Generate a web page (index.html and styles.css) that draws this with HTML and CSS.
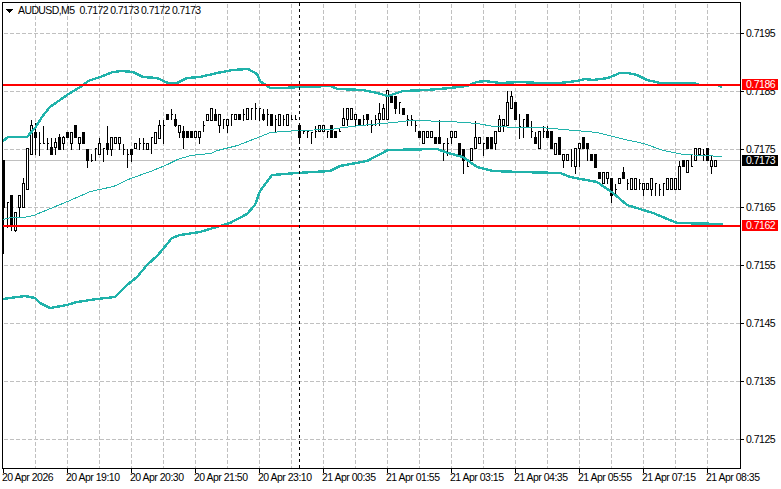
FILE: index.html
```html
<!DOCTYPE html>
<html lang="en">
<head>
<meta charset="utf-8">
<title>AUDUSD,M5</title>
<link rel="stylesheet" href="styles.css">
</head>
<body>
<main class="terminal">
  <svg class="chart" viewBox="0 0 781 489" width="781" height="489" aria-hidden="true">
    <g class="crisp" transform="translate(.5 .5)">
      <path class="grid" d="M35 3V468M67 3V468M99 3V468M131 3V468M163 3V468M195 3V468M227 3V468M259 3V468M291 3V468M323 3V468M355 3V468M387 3V468M419 3V468M451 3V468M483 3V468M515 3V468M547 3V468M579 3V468M611 3V468M643 3V468M675 3V468M707 3V468"/>
      <path class="grid" d="M3 33H740M3 91H740M3 149H740M3 207H740M3 265H740M3 323H740M3 381H740M3 439H740"/>
      <path class="bid" d="M3 160H740"/>
      <path class="wick" d="M3 160V253M7 201V227M6 202h2M11 195V230M15 212V231M19 195V217M23 177V207M27 148V189M31 119V154M35 122V154M39 131V155M38 143h2M43 125V143M42 143h2M47 137V149M46 143h2M51 137V154M55 137V154M59 133V149M63 135V149M71 132V149M79 137V149M87 149V167M91 153V161M90 160h2M95 148V160M94 148h2M99 137V154M103 148V161M102 148h2M107 125V154M111 137V155M119 137V149M123 143V154M122 149h2M127 148V167M126 154h2M131 149V161M139 137V149M138 143h2M143 137V149M142 143h2M147 142V149M151 137V153M150 137h2M159 119V138M163 119V143M162 125h2M171 108V119M170 114h2M175 113V126M179 125V137M183 125V148M199 131V143M203 120V131M202 125h2M215 108V120M219 114V132M223 119V128M222 119h2M227 119V132M231 114V125M230 114h2M243 108V120M242 114h2M251 108V119M250 108h2M255 102V119M254 108h2M259 108V120M258 108h2M263 108V120M267 108V125M266 114h2M275 114V132M274 119h2M283 114V125M282 119h2M291 114V119M290 119h2M295 114V119M294 119h2M299 125V141M303 129V133M302 131h2M307 131V137M306 131h2M311 131V143M310 132h2M315 125V137M314 131h2M327 131V137M326 131h2M339 127V131M338 131h2M343 107V125M347 108V125M355 114V125M363 114V125M362 119h2M367 114V125M371 119V132M370 125h2M375 114V125M374 119h2M379 102V125M383 103V119M395 96V113M399 102V113M398 102h2M407 114V125M406 119h2M411 114V125M410 119h2M415 119V131M414 125h2M439 119V143M443 143V160M442 143h2M447 137V155M446 143h2M451 131V143M463 149V173M467 160V166M466 166h2M475 120V148M483 143V155M482 143h2M495 131V149M499 114V131M503 119V131M507 90V125M511 90V108M519 113V138M518 126h2M523 119V137M522 119h2M531 120V137M530 131h2M535 131V143M543 125V137M542 131h2M547 125V137M563 154V167M571 148V166M570 160h2M575 148V173M579 143V166M587 143V160M607 172V183M611 178V202M615 183V195M614 189h2M623 166V178M627 178V189M626 183h2M639 178V189M638 183h2M643 183V195M651 178V195M655 183V195M654 183h2M659 183V195M658 189h2M663 183V195M662 183h2M679 160V189M691 154V166M690 166h2M703 148V160M702 154h2M711 154V173"/>
      <path class="body-up" d="M14 212h2v18h-2zM18 195h2v12h-2zM22 183h2v24h-2zM26 148h2v41h-2zM30 125h2v29h-2zM54 142h2v5h-2zM62 137h2v6h-2zM70 132h2v11h-2zM78 137h2v6h-2zM98 143h2v11h-2zM110 137h2v12h-2zM114 137h2v6h-2zM118 137h2v6h-2zM134 143h2v5h-2zM146 143h2v6h-2zM154 132h2v11h-2zM158 125h2v13h-2zM178 125h2v7h-2zM194 131h2v6h-2zM198 131h2v6h-2zM206 114h2v6h-2zM210 108h2v12h-2zM218 114h2v11h-2zM226 119h2v6h-2zM234 114h2v5h-2zM246 108h2v11h-2zM278 114h2v11h-2zM286 114h2v11h-2zM318 125h2v6h-2zM322 125h2v6h-2zM342 118h2v7h-2zM346 108h2v11h-2zM350 108h2v11h-2zM354 114h2v5h-2zM378 113h2v6h-2zM382 108h2v11h-2zM386 90h2v29h-2zM422 131h2v12h-2zM426 131h2v6h-2zM430 131h2v6h-2zM450 131h2v6h-2zM454 131h2v6h-2zM470 148h2v12h-2zM474 137h2v11h-2zM478 137h2v6h-2zM494 131h2v12h-2zM498 119h2v12h-2zM502 119h2v6h-2zM506 102h2v23h-2zM510 96h2v12h-2zM538 131h2v17h-2zM554 143h2v11h-2zM562 154h2v6h-2zM566 154h2v6h-2zM574 148h2v18h-2zM578 143h2v5h-2zM602 172h2v11h-2zM606 172h2v6h-2zM618 178h2v5h-2zM630 178h2v11h-2zM634 178h2v11h-2zM642 183h2v6h-2zM646 183h2v6h-2zM650 178h2v11h-2zM666 178h2v11h-2zM670 178h2v11h-2zM674 178h2v11h-2zM678 166h2v23h-2zM686 160h2v12h-2zM694 148h2v12h-2zM698 148h2v6h-2zM710 160h2v6h-2zM714 160h2v6h-2z"/>
      <path class="body-down" d="M2 160h2v47h-2zM10 195h2v31h-2zM34 132h2v5h-2zM50 147h2v7h-2zM58 137h2v12h-2zM66 132h2v5h-2zM74 125h2v12h-2zM82 132h2v11h-2zM86 149h2v11h-2zM106 143h2v6h-2zM130 149h2v5h-2zM166 114h2v5h-2zM174 119h2v6h-2zM182 131h2v6h-2zM186 131h2v6h-2zM190 131h2v6h-2zM214 114h2v6h-2zM238 114h2v5h-2zM262 114h2v5h-2zM270 114h2v11h-2zM298 125h2v12h-2zM330 125h2v12h-2zM334 131h2v6h-2zM358 119h2v6h-2zM366 114h2v5h-2zM390 96h2v6h-2zM394 96h2v12h-2zM402 108h2v6h-2zM418 131h2v6h-2zM434 137h2v6h-2zM438 137h2v6h-2zM458 143h2v12h-2zM462 149h2v11h-2zM486 137h2v11h-2zM490 137h2v11h-2zM514 102h2v17h-2zM526 114h2v12h-2zM534 137h2v6h-2zM546 131h2v6h-2zM550 131h2v17h-2zM558 137h2v17h-2zM582 137h2v11h-2zM586 143h2v5h-2zM590 154h2v6h-2zM594 154h2v13h-2zM598 172h2v6h-2zM610 178h2v17h-2zM622 172h2v6h-2zM682 160h2v6h-2zM706 148h2v12h-2z"/>
      <polyline class="mid" points="3,219 10,217 23,217 33,215 50,208 67,201 90,191 113,186 130,178 150,171 167,164 177,159 190,155 210,153 217,150 237,145 260,136 270,132 297,130 330,129 343,127 360,125 393,122 410,120 450,121 477,123 493,126 520,127 540,127 563,129 597,132 620,138 643,143 663,150 683,154 722,156"/>
    </g>
    <g class="crisp">
      <polyline class="band" points="3,141 8,137 27,137 35,128 42,117 50,107 67,95 82,86 88,81 100,77 113,72 122,71 133,72 143,77 157,78 168,83 177,83 187,78 200,77 217,73 233,70 248,69 257,74 260,81 270,88 283,88 300,87 330,86 338,89 363,90 377,93 388,96 403,91 427,90 450,88 467,86 477,82 485,81 500,83 520,82 540,83 560,83 577,81 585,79 593,80 608,78 620,73 628,73 637,75 647,80 660,83 693,83 700,85 718,85 722,87"/>
      <polyline class="band" points="3,299 10,298 25,296 35,298 40,303 50,308 67,305 77,302 97,299 115,297 127,285 137,277 147,265 158,255 172,238 180,235 200,232 213,228 230,223 247,214 255,205 260,191 272,175 297,173 330,171 340,166 367,161 388,150 437,149 448,153 463,157 477,167 493,171 520,172 560,173 570,177 597,182 613,193 627,205 653,213 677,223 723,224"/>
      <path class="level" d="M3 85H740M3 226H740"/>
      <path class="cursor" d="M299.500 3V468"/>
      <path class="frame" d="M2.500 2.500H740.500V468.500H2.500Z"/>
      <path class="frame" d="M741 33.500h3M741 91.500h3M741 149.500h3M741 207.500h3M741 265.500h3M741 323.500h3M741 381.500h3M741 439.500h3M3.500 469v4M67.500 469v4M131.500 469v4M195.500 469v4M259.500 469v4M323.500 469v4M387.500 469v4M451.500 469v4M515.500 469v4M579.500 469v4M643.500 469v4M707.500 469v4"/>
      <path class="caret" d="M6 9h7l-3.500 4z"/>
    </g>
  </svg>

  <header class="legend">
    <span>AUDUSD,M5</span>
    <span>0.7172 0.7173 0.7172 0.7173</span>
  </header>

  <div class="price-axis">
    <span class="price">0.7195</span>
    <span class="price">0.7185</span>
    <span class="price">0.7175</span>
    <span class="price">0.7165</span>
    <span class="price">0.7155</span>
    <span class="price">0.7145</span>
    <span class="price">0.7135</span>
    <span class="price">0.7125</span>
    <span class="tag tag-red tag-high">0.7186</span>
    <span class="tag tag-black tag-bid">0.7173</span>
    <span class="tag tag-red tag-low">0.7162</span>
  </div>

  <div class="time-axis">
    <span>20 Apr 2026</span>
    <span>20 Apr 19:10</span>
    <span>20 Apr 20:30</span>
    <span>20 Apr 21:50</span>
    <span>20 Apr 23:10</span>
    <span>21 Apr 00:35</span>
    <span>21 Apr 01:55</span>
    <span>21 Apr 03:15</span>
    <span>21 Apr 04:35</span>
    <span>21 Apr 05:55</span>
    <span>21 Apr 07:15</span>
    <span>21 Apr 08:35</span>
  </div>
</main>
</body>
</html>
```

FILE: styles.css
```css
html, body {
  margin: 0;
  padding: 0;
  background: #fff;
}

.terminal {
  display: grid;
  grid-template-columns: 741px 40px;
  grid-template-rows: 469px 20px;
  width: 781px;
  height: 489px;
  overflow: hidden;
  color: #000;
  font-family: "Liberation Sans", Arial, sans-serif;
  font-size: 10.5px;
  letter-spacing: -0.5px;
}

.chart {
  grid-area: 1 / 1 / 3 / 3;
  display: block;
}

.crisp { shape-rendering: crispEdges; }

.grid {
  fill: none;
  stroke: #c0c0c0;
  stroke-width: 1;
  stroke-dasharray: 4 2;
}

.bid { fill: none; stroke: #c0c0c0; stroke-width: 1; }
.wick { fill: none; stroke: #000; stroke-width: 1; }
.body-up { fill: #fff; stroke: #000; stroke-width: 1; }
.body-down { fill: #000; stroke: #000; stroke-width: 1; }
.band { fill: none; stroke: #20b2aa; stroke-width: 2.4; stroke-linejoin: round; }
.mid { fill: none; stroke: #20b2aa; stroke-width: 1; stroke-linejoin: round; }
.level { fill: none; stroke: #f00; stroke-width: 2; }
.cursor { fill: none; stroke: #000; stroke-width: 1; stroke-dasharray: 3 3; }
.frame { fill: none; stroke: #000; stroke-width: 1; }
.caret { fill: #000; }

.legend {
  grid-area: 1 / 1;
  align-self: start;
  z-index: 1;
  display: flex;
  gap: 5px;
  padding: 4px 0 0 18px;
  letter-spacing: -0.6px;
  line-height: 13px;
}

.price-axis {
  grid-area: 1 / 2;
  position: relative;
  z-index: 1;
  display: flex;
  flex-direction: column;
  padding-top: 4px;
}

.price {
  flex: 0 0 58px;
  padding-left: 5px;
  line-height: 58px;
}

.tag {
  position: absolute;
  left: 1px;
  width: 32px;
  height: 11px;
  padding-left: 4px;
  color: #fff;
  line-height: 11px;
}

.tag-red { background: #f00; }
.tag-black { background: #000; }
.tag-high { top: 79px; }
.tag-bid { top: 155px; }
.tag-low { top: 220px; }

.time-axis {
  grid-area: 2 / 1 / 3 / 3;
  z-index: 1;
  display: flex;
  padding-left: 2px;
  line-height: 17px;
}

.time-axis span {
  flex: 0 0 64px;
  white-space: nowrap;
}
```
